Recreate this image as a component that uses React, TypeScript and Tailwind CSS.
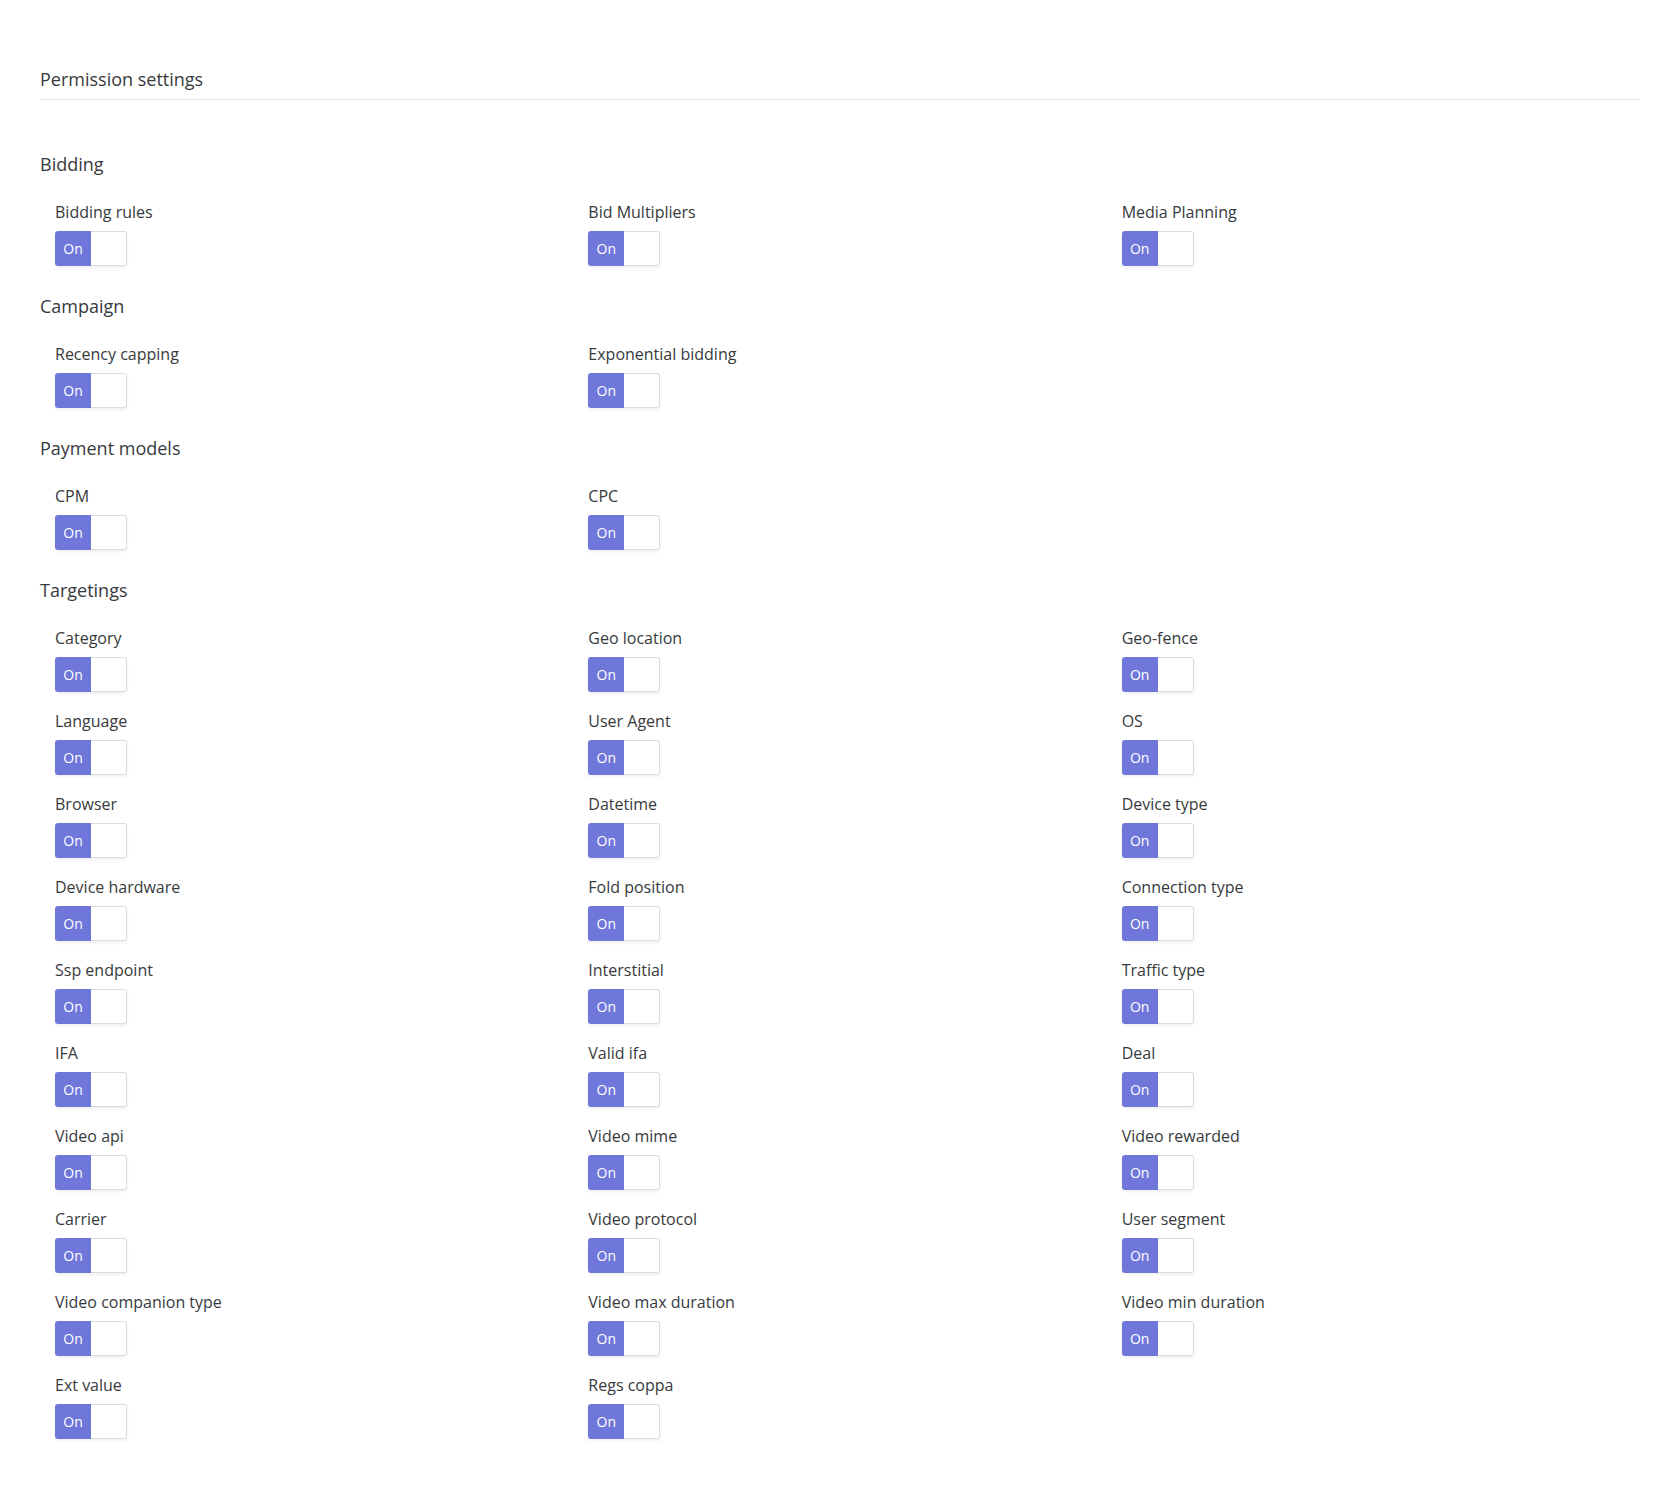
const sections = [
  { title: "Bidding", items: ["Bidding rules", "Bid Multipliers", "Media Planning"] },
  { title: "Campaign", items: ["Recency capping", "Exponential bidding"] },
  { title: "Payment models", items: ["CPM", "CPC"] },
  {
    title: "Targetings",
    items: [
      "Category", "Geo location", "Geo-fence",
      "Language", "User Agent", "OS",
      "Browser", "Datetime", "Device type",
      "Device hardware", "Fold position", "Connection type",
      "Ssp endpoint", "Interstitial", "Traffic type",
      "IFA", "Valid ifa", "Deal",
      "Video api", "Video mime", "Video rewarded",
      "Carrier", "Video protocol", "User segment",
      "Video companion type", "Video max duration", "Video min duration",
      "Ext value", "Regs coppa",
    ],
  },
];

function Toggle() {
  return (
    <div className="flex h-[35px] w-[72px] rounded-[3px] shadow-[0_2px_3px_rgba(0,0,0,0.06)]">
      <div className="flex w-[36px] items-center justify-center rounded-l-[3px] bg-[#6f77da] text-[14px] text-white">
        On
      </div>
      <div className="flex-1 rounded-r-[3px] border border-l-0 border-[#dcdcdc] bg-white" />
    </div>
  );
}

export default function App() {
  return (
    <div className="min-h-[1505px] bg-white pl-10 pr-[23px] pt-[66px] font-['Open_Sans',sans-serif] text-[#373a3c]">
      <div className="border-b border-[#e6e6e6] pb-[7px] text-[18px] leading-[26px]">Permission settings</div>

      <div className="mt-[51px]">
        {sections.map((s) => (
          <div key={s.title} className="mb-[27px]">
            <div className="mb-6 text-[18px] leading-[26px]">{s.title}</div>
            <div className="grid grid-cols-3 gap-y-[18px]">
              {s.items.map((label) => (
                <div key={label} className="px-[15px]">
                  <div className="mb-2 text-[16px] leading-[22px]">{label}</div>
                  <Toggle />
                </div>
              ))}
            </div>
          </div>
        ))}
      </div>
    </div>
  );
}
